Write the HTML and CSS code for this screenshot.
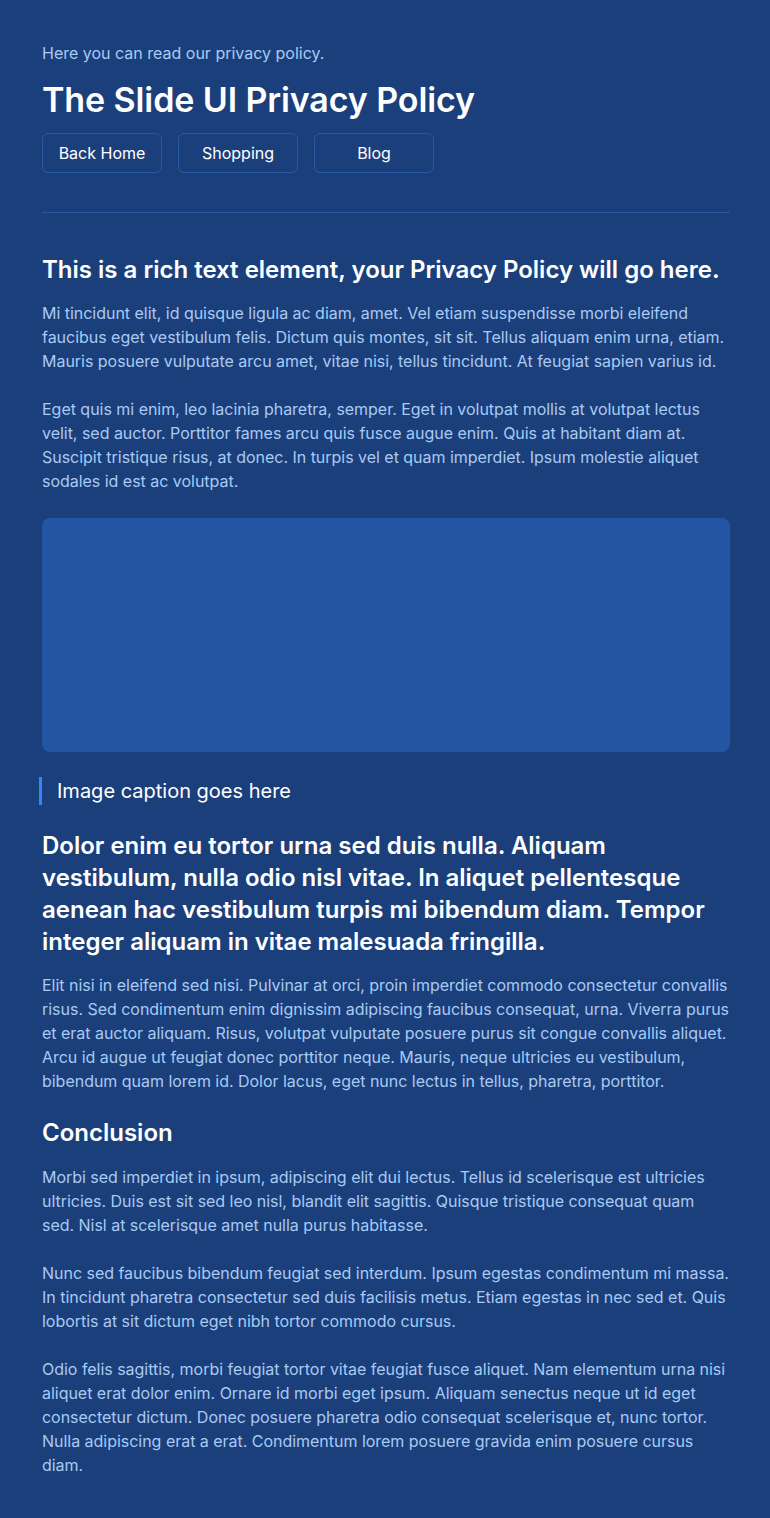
FILE: index.html
```html
<!DOCTYPE html>
<html lang="en">
<head>
<meta charset="utf-8">
<title>The Slide UI Privacy Policy</title>
<link rel="stylesheet" href="styles.css">
</head>
<body>
<main class="page">
  <header class="hero">
    <p class="eyebrow">Here you can read our privacy policy.</p>
    <h1 class="title">The Slide UI Privacy Policy</h1>
    <nav class="nav">
      <a class="btn" href="#">Back Home</a>
      <a class="btn" href="#">Shopping</a>
      <a class="btn" href="#">Blog</a>
    </nav>
  </header>
  <hr class="divider">
  <article class="rich">
    <h2 class="h2">This is a rich text element, your Privacy Policy will go here.</h2>
    <p class="p first">Mi tincidunt elit, id quisque ligula ac diam, amet. Vel etiam suspendisse morbi eleifend faucibus eget vestibulum felis. Dictum quis montes, sit sit. Tellus aliquam enim urna, etiam. Mauris posuere vulputate arcu amet, vitae nisi, tellus tincidunt. At feugiat sapien varius id.</p>
    <p class="p">Eget quis mi enim, leo lacinia pharetra, semper. Eget in volutpat mollis at volutpat lectus velit, sed auctor. Porttitor fames arcu quis fusce augue enim. Quis at habitant diam at. Suscipit tristique risus, at donec. In turpis vel et quam imperdiet. Ipsum molestie aliquet sodales id est ac volutpat.</p>
    <figure class="figure">
      <div class="image"></div>
      <figcaption class="caption">Image caption goes here</figcaption>
    </figure>
    <h3 class="h3">Dolor enim eu tortor urna sed duis nulla. Aliquam vestibulum, nulla odio nisl vitae. In aliquet pellentesque aenean hac vestibulum turpis mi bibendum diam. Tempor integer aliquam in vitae malesuada fringilla.</h3>
    <p class="p first">Elit nisi in eleifend sed nisi. Pulvinar at orci, proin imperdiet commodo consectetur convallis risus. Sed condimentum enim dignissim adipiscing faucibus consequat, urna. Viverra purus et erat auctor aliquam. Risus, volutpat vulputate posuere purus sit congue convallis aliquet. Arcu id augue ut feugiat donec porttitor neque. Mauris, neque ultricies eu vestibulum, bibendum quam lorem id. Dolor lacus, eget nunc lectus in tellus, pharetra, porttitor.</p>
    <h4 class="h4">Conclusion</h4>
    <p class="p first2">Morbi sed imperdiet in ipsum, adipiscing elit dui lectus. Tellus id scelerisque est ultricies ultricies. Duis est sit sed leo nisl, blandit elit sagittis. Quisque tristique consequat quam sed. Nisl at scelerisque amet nulla purus habitasse.</p>
    <p class="p">Nunc sed faucibus bibendum feugiat sed interdum. Ipsum egestas condimentum mi massa. In tincidunt pharetra consectetur sed duis facilisis metus. Etiam egestas in nec sed et. Quis lobortis at sit dictum eget nibh tortor commodo cursus.</p>
    <p class="p">Odio felis sagittis, morbi feugiat tortor vitae feugiat fusce aliquet. Nam elementum urna nisi aliquet erat dolor enim. Ornare id morbi eget ipsum. Aliquam senectus neque ut id eget consectetur dictum. Donec posuere pharetra odio consequat scelerisque et, nunc tortor. Nulla adipiscing erat a erat. Condimentum lorem posuere gravida enim posuere cursus diam.</p>
  </article>
</main>
</body>
</html>
```

FILE: styles.css
```css
* { box-sizing: border-box; }
html, body {
  margin: 0;
  padding: 0;
  background: #1b3f7b;
}
body {
  font-family: Inter, "Noto Sans", "Liberation Sans", sans-serif;
  color: #ffffff;
  min-height: 1518px;
}
.page {
  padding: 41px 40px 40px 42px;
}
.hero { margin: 0; }
.eyebrow {
  margin: 0;
  font-size: 16px;
  line-height: 24px;
  color: #a9caf3;
}
.title {
  margin: 15px 0 0;
  font-size: 34px;
  line-height: 40px;
  font-weight: 600;
  letter-spacing: -0.1px;
  color: #ffffff;
}
.nav {
  display: flex;
  gap: 16px;
  margin-top: 13px;
}
.btn {
  display: flex;
  align-items: center;
  justify-content: center;
  width: 120px;
  height: 40px;
  border: 1px solid #2b58a3;
  border-radius: 6px;
  color: #ffffff;
  text-decoration: none;
  font-size: 16px;
}
.divider {
  margin: 39px 0 0;
  border: 0;
  height: 1px;
  background: #2a58a6;
}
.rich { margin-top: 41px; }
.h2 {
  margin: 0;
  font-size: 24px;
  line-height: 32px;
  font-weight: 600;
}
.p {
  margin: 24px 0 0;
  font-size: 16px;
  line-height: 24px;
  letter-spacing: -0.025px;
  color: #a9caf3;
}
.p.first { margin-top: 15px; }
.p.first2 { margin-top: 16px; }
.figure {
  margin: 25px 0 0;
}
.image {
  height: 234px;
  background: #2355a3;
  border-radius: 8px;
}
.caption {
  margin: 25px 0 0 -3px;
  padding-left: 15px;
  border-left: 3px solid #3b82f6;
  font-size: 20px;
  line-height: 28px;
  color: #ffffff;
}
.h3 {
  margin: 25px 0 0;
  font-size: 24px;
  line-height: 32px;
  font-weight: 600;
}
.h4 {
  margin: 24px 0 0;
  font-size: 24px;
  line-height: 32px;
  font-weight: 600;
}
```
